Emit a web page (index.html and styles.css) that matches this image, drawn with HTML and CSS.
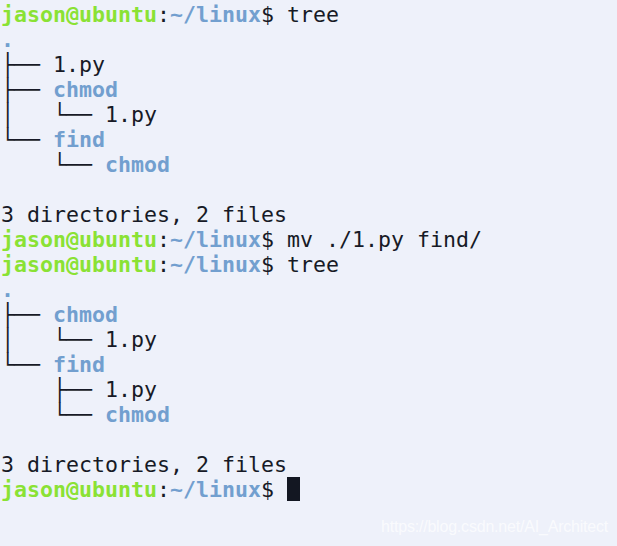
FILE: index.html
```html
<!DOCTYPE html>
<html>
<head>
<meta charset="utf-8">
<link rel="stylesheet" href="styles.css">
</head>
<body>
<pre class="term"><span class="u">jason@ubuntu</span>:<span class="d">~/linux</span>$ tree
<span class="d">.</span>
├── 1.py
├── <span class="d">chmod</span>
│   └── 1.py
└── <span class="d">find</span>
    └── <span class="d">chmod</span>

3 directories, 2 files
<span class="u">jason@ubuntu</span>:<span class="d">~/linux</span>$ mv ./1.py find/
<span class="u">jason@ubuntu</span>:<span class="d">~/linux</span>$ tree
<span class="d">.</span>
├── <span class="d">chmod</span>
│   └── 1.py
└── <span class="d">find</span>
    ├── 1.py
    └── <span class="d">chmod</span>

3 directories, 2 files
<span class="u">jason@ubuntu</span>:<span class="d">~/linux</span>$ <span class="cursor"> </span></pre>
<div class="mark">https://blog.csdn.net/AI_Architect</div>
</body>
</html>
```

FILE: styles.css
```css
html, body {
  margin: 0;
  padding: 0;
  background: #eef1fa;
  height: 546px;
  overflow: hidden;
}
body {
  position: relative;
}
.term {
  margin: 0;
  padding: 2px 0 0 1px;
  font-family: "DejaVu Sans Mono", monospace;
  font-size: 21.6px;
  line-height: 25px;
  color: #171a26;
}
.u {
  color: #8ae234;
  font-weight: bold;
}
.d {
  color: #729fcf;
  font-weight: bold;
}
.cursor {
  display: inline-block;
  width: 13px;
  height: 24px;
  vertical-align: top;
  background: #131722;
}
.mark {
  position: absolute;
  left: 381px;
  top: 518px;
  font-family: "Liberation Sans", Arial, sans-serif;
  font-size: 16px;
  color: rgba(255, 255, 255, 0.7);
  letter-spacing: -0.2px;
}
```
